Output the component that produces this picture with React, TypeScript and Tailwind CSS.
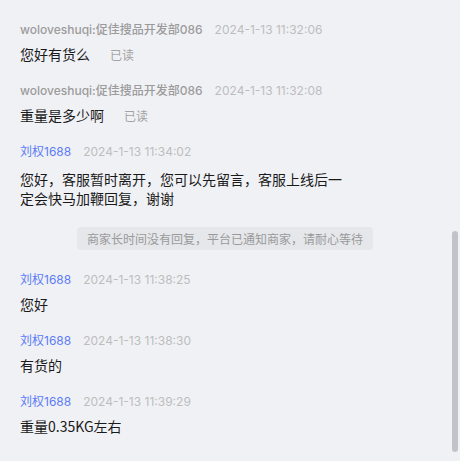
import * as React from 'react';

type Msg = {
  name: string;
  time: string;
  text: string;
  self?: boolean;
  read?: boolean;
};

const font = { fontFamily: '"Noto Sans CJK SC", "Noto Sans", sans-serif' };
const metaFont = { fontFamily: 'Inter, "Noto Sans CJK SC", sans-serif' };

function Message({ msg }: { msg: Msg }) {
  return (
    <div className="flex flex-col">
      <div className="flex items-center h-5 leading-5 text-[12px]" style={metaFont}>
        <span className={msg.self ? 'text-[#9b9b9b] font-medium' : 'text-[#5b7cf6]'}>{msg.name}</span>
        <span className="ml-3 text-[#bdbdbd]">{msg.time}</span>
      </div>
      <div className={`flex items-center ${msg.text.length > 23 ? 'mt-[8px]' : 'mt-[5px]'}`}>
        <span className="max-w-[330px] text-[14px] leading-[19px] text-[#1a1a1a]">{msg.text}</span>
        {msg.read && <span className="ml-5 text-[12px] text-[#a3a3a3]">已读</span>}
      </div>
    </div>
  );
}

export default function App() {
  const first: Msg[] = [
    { name: 'woloveshuqi:促佳搜品开发部086', time: '2024-1-13 11:32:06', text: '您好有货么', self: true, read: true },
    { name: 'woloveshuqi:促佳搜品开发部086', time: '2024-1-13 11:32:08', text: '重量是多少啊', self: true, read: true },
    { name: '刘权1688', time: '2024-1-13 11:34:02', text: '您好，客服暂时离开，您可以先留言，客服上线后一定会快马加鞭回复，谢谢' },
  ];
  const rest: Msg[] = [
    { name: '刘权1688', time: '2024-1-13 11:38:25', text: '您好' },
    { name: '刘权1688', time: '2024-1-13 11:38:30', text: '有货的' },
    { name: '刘权1688', time: '2024-1-13 11:39:29', text: '重量0.35KG左右' },
  ];

  return (
    <div className="relative w-[460px] h-[461px] overflow-hidden bg-[#f0f1f5]" style={font}>
      <div className="w-[450px] flex flex-col gap-[17px] px-5 pt-5">
        {first.map((m, i) => (
          <Message key={i} msg={m} />
        ))}
        <div className="flex justify-center mt-[2px] mb-[3px]">
          <div className="h-[23px] px-[10px] flex items-center rounded bg-[#e5e7eb] text-[12px] text-[#9a9a9a]">
            商家长时间没有回复，平台已通知商家，请耐心等待
          </div>
        </div>
        {rest.map((m, i) => (
          <Message key={i} msg={m} />
        ))}
      </div>
      <div className="absolute left-[452px] top-[231px] w-[6px] h-[221px] rounded-full bg-[#c1c3c8]" />
    </div>
  );
}
